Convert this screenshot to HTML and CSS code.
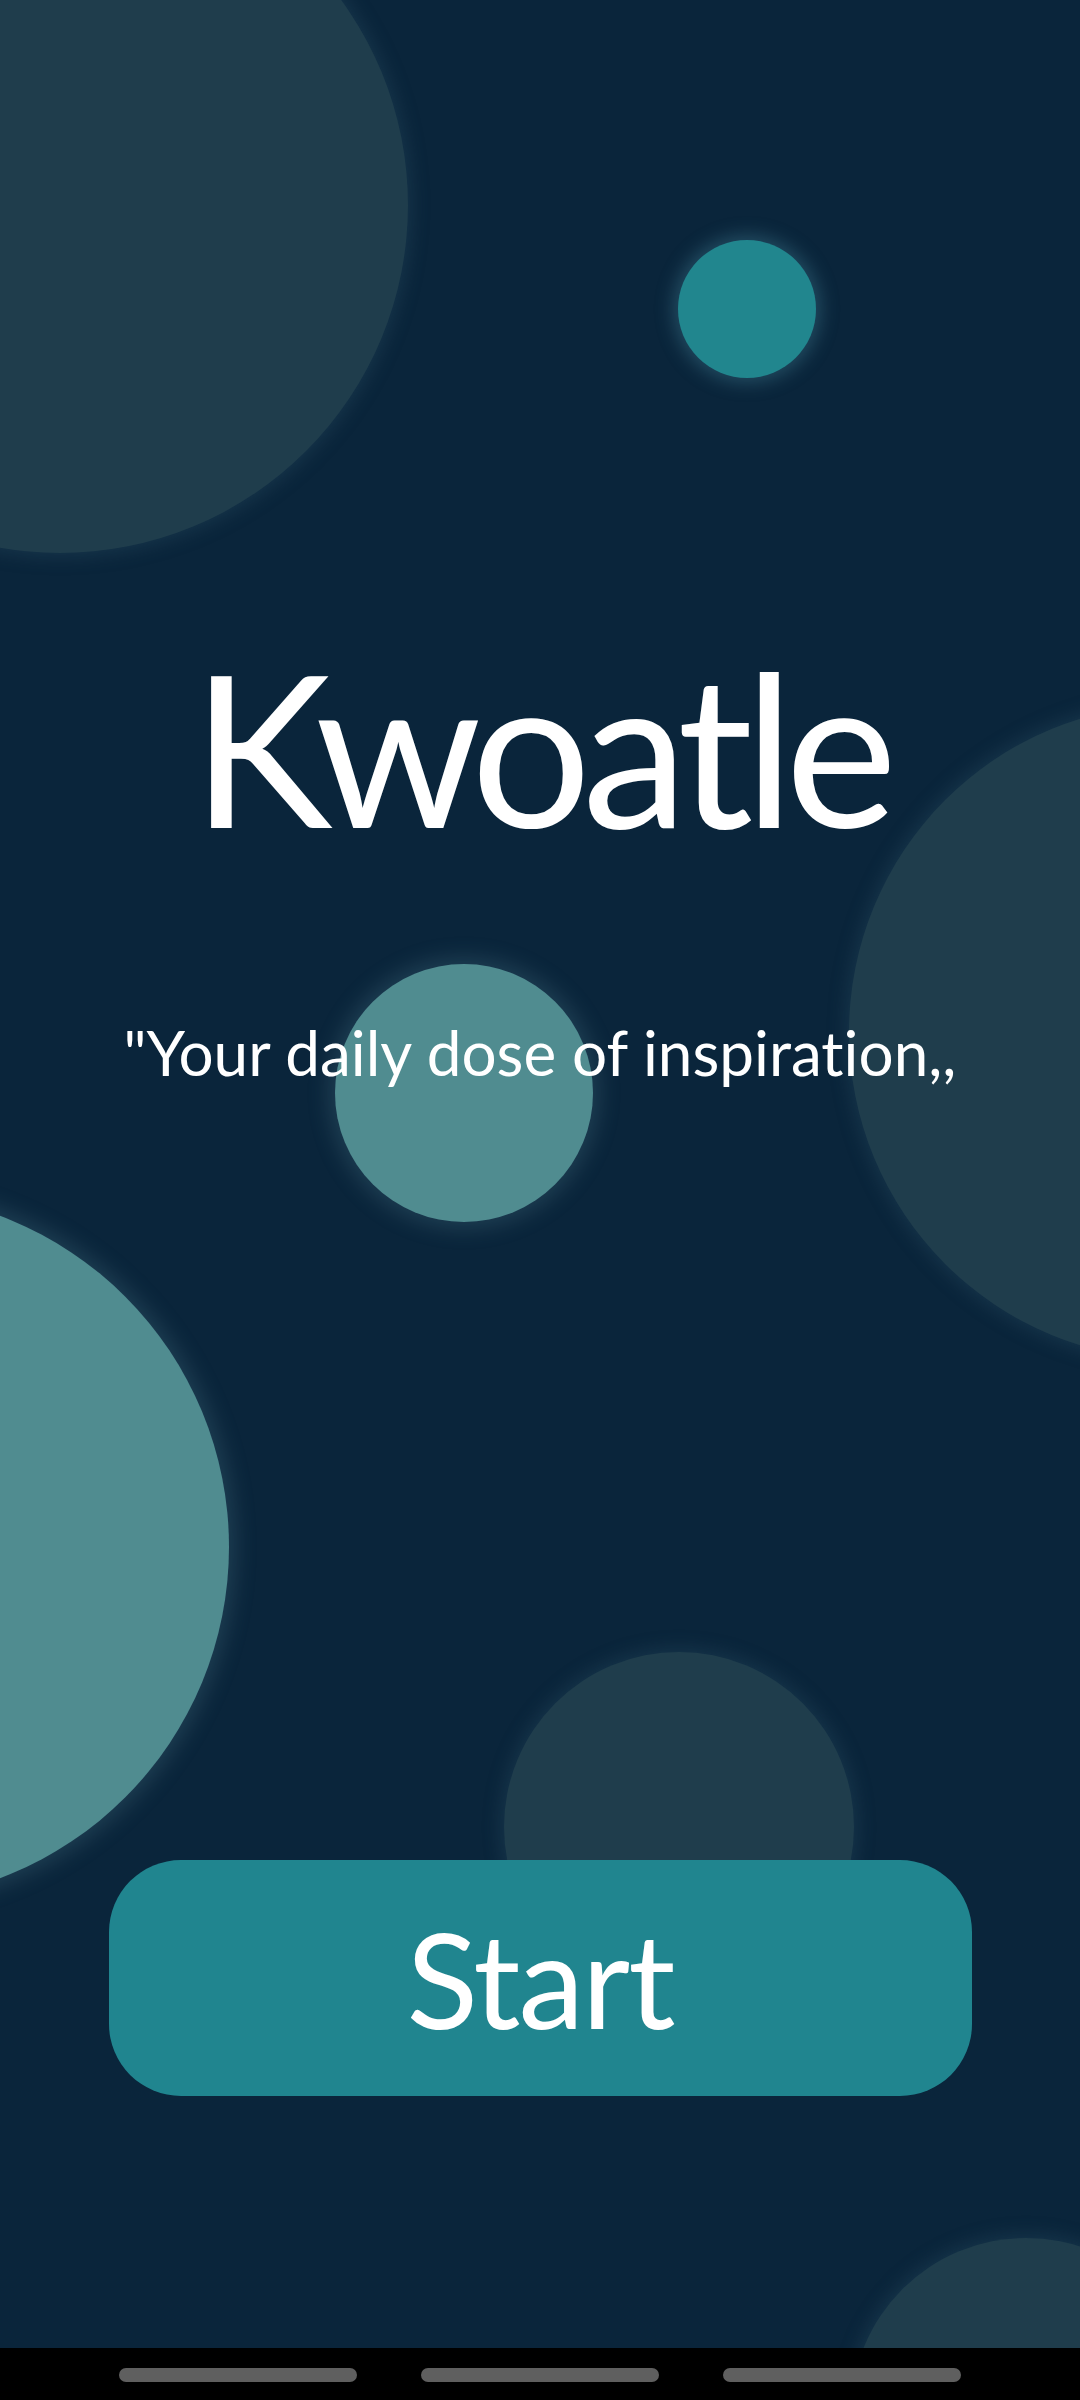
FILE: index.html
```html
<!DOCTYPE html>
<html lang="en">
<head>
<meta charset="utf-8">
<title>Kwoatle</title>
<link rel="stylesheet" href="styles.css">
</head>
<body>
<div class="screen">
  <div class="bubbles" aria-hidden="true">
    <div class="bubble bubble-dark b-topleft"></div>
    <div class="bubble bubble-teal b-small"></div>
    <div class="bubble bubble-dark b-right"></div>
    <div class="bubble bubble-light b-mid"></div>
    <div class="bubble bubble-light b-left"></div>
    <div class="bubble bubble-dark b-bottom"></div>
    <div class="bubble bubble-dark b-corner"></div>
  </div>
  <main class="content">
    <h1 class="title">Kwoatle</h1>
    <p class="tagline">"Your daily dose of inspiration,,</p>
    <button class="start-btn">Start</button>
  </main>
  <nav class="navbar">
    <span class="pill"></span>
    <span class="pill"></span>
    <span class="pill"></span>
  </nav>
</div>
</body>
</html>
```
FILE: styles.css
```css
* { box-sizing: border-box; }
html, body { margin: 0; padding: 0; }
body {
  width: 1080px;
  height: 2400px;
  background: #0a253b;
  font-family: Lato, "Open Sans", sans-serif;
  font-variant-ligatures: none;
  overflow: hidden;
}
.screen {
  position: relative;
  width: 1080px;
  height: 2400px;
  display: flex;
  flex-direction: column;
  overflow: hidden;
}
.bubbles {
  position: absolute;
  left: 0; top: 0;
  width: 1080px;
  height: 2348px;
  overflow: hidden;
}
.bubble {
  position: absolute;
  border-radius: 50%;
}
.bubble-dark {
  background: #1f3d4c;
  box-shadow: 0 0 18px 4px rgba(60, 100, 120, 0.25);
}
.bubble-light {
  background: #508c90;
  box-shadow: 0 0 22px 6px rgba(110, 160, 175, 0.22);
}
.bubble-teal {
  background: #21868e;
  box-shadow: 0 0 18px 5px rgba(80, 150, 170, 0.35);
}
.b-topleft { left: -288px; top: -143px; width: 696px; height: 696px; }
.b-small   { left: 678px;  top: 240px;  width: 138px; height: 138px; }
.b-right   { left: 849px;  top: 704px;  width: 656px; height: 656px; }
.b-mid     { left: 335px;  top: 964px;  width: 258px; height: 258px; }
.b-left    { left: -479px; top: 1193px; width: 708px; height: 708px; }
.b-bottom  { left: 504px;  top: 1652px; width: 350px; height: 350px; }
.b-corner  { left: 851px;  top: 2238px; width: 350px; height: 350px; }

.content {
  position: relative;
  flex: 1;
  display: flex;
  flex-direction: column;
  align-items: center;
  padding-top: 640px;
}
.title {
  margin: 0;
  font-size: 212px;
  line-height: 1;
  font-weight: 400;
  color: #ffffff;
  letter-spacing: -9px;
  padding-left: 0;
}
.tagline {
  margin: 169px 0 0;
  font-size: 62px;
  line-height: 1;
  color: #ffffff;
}
.start-btn {
  margin-top: 777px;
  width: 863px;
  height: 236px;
  border: none;
  border-radius: 72px;
  background: #20858f;
  color: #ffffff;
  font-family: Lato, "Open Sans", sans-serif;
  font-size: 132px;
  letter-spacing: -2px;
  line-height: 1;
  padding: 0;
  display: flex;
  align-items: center;
  justify-content: center;
}
.navbar {
  position: relative;
  height: 52px;
  background: #000000;
  display: flex;
  justify-content: center;
  align-items: center;
  gap: 64px;
  padding-top: 2px;
}
.pill {
  width: 238px;
  height: 14px;
  border-radius: 7px;
  background: #5f5f5f;
}
```
